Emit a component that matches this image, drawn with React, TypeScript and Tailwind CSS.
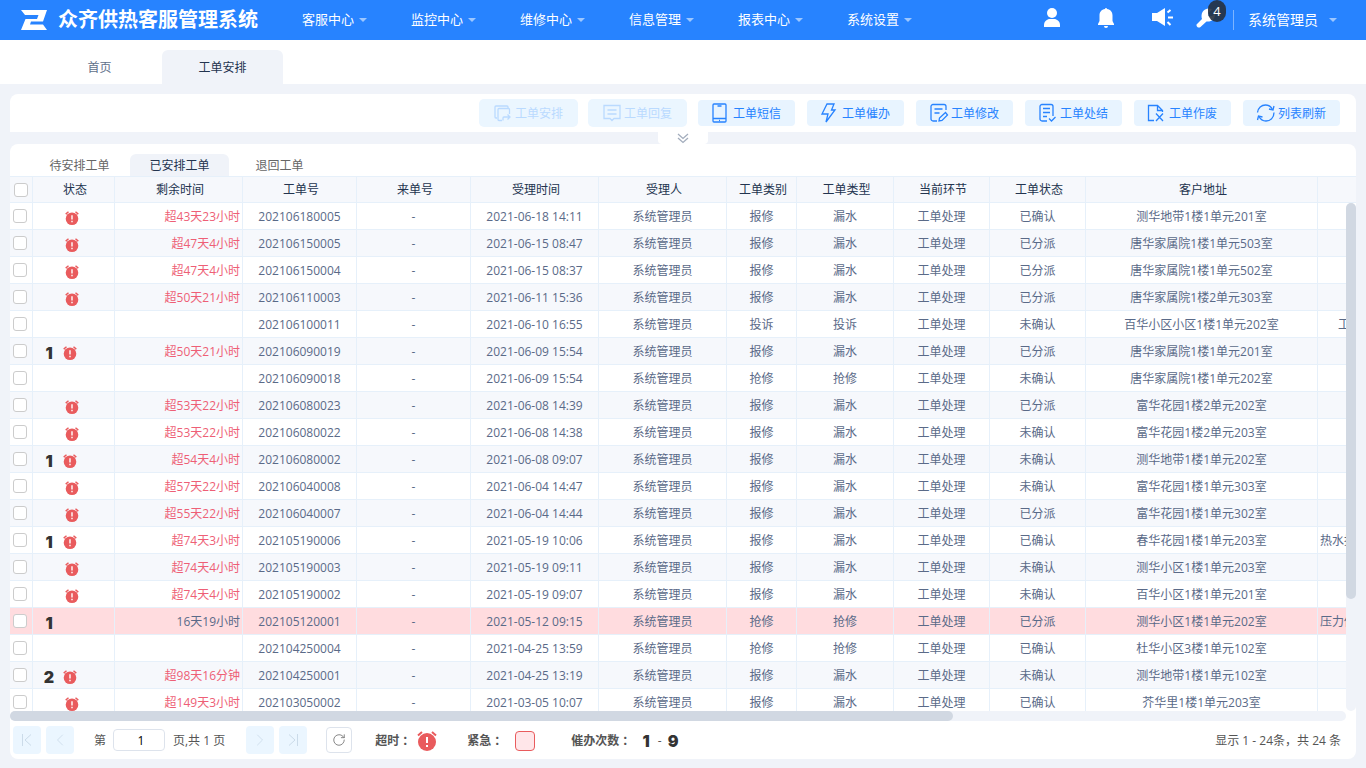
import type { ReactNode } from 'react'
import { ChevronLeft, ChevronRight, RotateCw } from 'lucide-react'

type Order = {
  urge?: number
  remain?: string
  no: string
  time: string
  kind: string
  type: string
  state: string
  address: string
  note?: string
  urgent?: boolean
}

const menus = ['客服中心', '监控中心', '维修中心', '信息管理', '报表中心', '系统设置']

const columns = [
  { title: '状态', width: 'w-[82px]' },
  { title: '剩余时间', width: 'w-[128px]' },
  { title: '工单号', width: 'w-[114px]' },
  { title: '来单号', width: 'w-[114px]' },
  { title: '受理时间', width: 'w-[128px]' },
  { title: '受理人', width: 'w-[128px]' },
  { title: '工单类别', width: 'w-[70px]' },
  { title: '工单类型', width: 'w-[97px]' },
  { title: '当前环节', width: 'w-[96px]' },
  { title: '工单状态', width: 'w-[96px]' },
  { title: '客户地址', width: 'w-[232px]' },
  { title: '', width: 'w-[232px]' },
]

const orders: Order[] = [
  { remain: '超43天23小时', no: '202106180005', time: '2021-06-18 14:11', kind: '报修', type: '漏水', state: '已确认', address: '测华地带1楼1单元201室' },
  { remain: '超47天4小时', no: '202106150005', time: '2021-06-15 08:47', kind: '报修', type: '漏水', state: '已分派', address: '唐华家属院1楼1单元503室' },
  { remain: '超47天4小时', no: '202106150004', time: '2021-06-15 08:37', kind: '报修', type: '漏水', state: '已分派', address: '唐华家属院1楼1单元502室' },
  { remain: '超50天21小时', no: '202106110003', time: '2021-06-11 15:36', kind: '报修', type: '漏水', state: '已分派', address: '唐华家属院1楼2单元303室' },
  { no: '202106100011', time: '2021-06-10 16:55', kind: '投诉', type: '投诉', state: '未确认', address: '百华小区小区1楼1单元202室', note: '工' },
  { urge: 1, remain: '超50天21小时', no: '202106090019', time: '2021-06-09 15:54', kind: '报修', type: '漏水', state: '已分派', address: '唐华家属院1楼1单元201室' },
  { no: '202106090018', time: '2021-06-09 15:54', kind: '抢修', type: '抢修', state: '未确认', address: '唐华家属院1楼1单元202室' },
  { remain: '超53天22小时', no: '202106080023', time: '2021-06-08 14:39', kind: '报修', type: '漏水', state: '已分派', address: '富华花园1楼2单元202室' },
  { remain: '超53天22小时', no: '202106080022', time: '2021-06-08 14:38', kind: '报修', type: '漏水', state: '未确认', address: '富华花园1楼2单元203室' },
  { urge: 1, remain: '超54天4小时', no: '202106080002', time: '2021-06-08 09:07', kind: '报修', type: '漏水', state: '未确认', address: '测华地带1楼1单元202室' },
  { remain: '超57天22小时', no: '202106040008', time: '2021-06-04 14:47', kind: '报修', type: '漏水', state: '未确认', address: '富华花园1楼1单元303室' },
  { remain: '超55天22小时', no: '202106040007', time: '2021-06-04 14:44', kind: '报修', type: '漏水', state: '已分派', address: '富华花园1楼1单元302室' },
  { urge: 1, remain: '超74天3小时', no: '202105190006', time: '2021-05-19 10:06', kind: '报修', type: '漏水', state: '已确认', address: '春华花园1楼1单元203室', note: '热水报' },
  { remain: '超74天4小时', no: '202105190003', time: '2021-05-19 09:11', kind: '报修', type: '漏水', state: '未确认', address: '测华小区1楼1单元203室' },
  { remain: '超74天4小时', no: '202105190002', time: '2021-05-19 09:07', kind: '报修', type: '漏水', state: '未确认', address: '百华小区1楼1单元201室' },
  { urge: 1, remain: '16天19小时', no: '202105120001', time: '2021-05-12 09:15', kind: '抢修', type: '抢修', state: '已分派', address: '测华小区1楼1单元202室', note: '压力低', urgent: true },
  { no: '202104250004', time: '2021-04-25 13:59', kind: '抢修', type: '抢修', state: '已确认', address: '杜华小区3楼1单元102室' },
  { urge: 2, remain: '超98天16分钟', no: '202104250001', time: '2021-04-25 13:19', kind: '报修', type: '漏水', state: '未确认', address: '测华地带1楼1单元102室' },
  { remain: '超149天3小时', no: '202103050002', time: '2021-03-05 10:07', kind: '报修', type: '漏水', state: '已确认', address: '芥华里1楼1单元203室' },
]

const tools: { label: string; disabled?: boolean; icon: ReactNode }[] = [
  {
    label: '工单安排',
    disabled: true,
    icon: (
      <>
        <path d="M4 15H3a1 1 0 0 1-1-1V4a1 1 0 0 1 1-1h11a1 1 0 0 1 1 1v1" />
        <path d="M16.5 11V6.5a1 1 0 0 0-1-1H6a1 1 0 0 0-1 1v10a1 1 0 0 0 1 1h3" />
        <path d="M10 17.5v-2.5a1 1 0 0 1 1-1h6M14.5 11.5 17 14l-2.500 2.500" />
      </>
    ),
  },
  {
    label: '工单回复',
    disabled: true,
    icon: <path d="M2 2.500h16v13h-6l-2 2-2-2H2zM5.500 7h9M5.500 11h9" />,
  },
  {
    label: '工单短信',
    icon: (
      <>
        <rect x="2" y="1" width="13" height="18" rx="1" />
        <path d="M2 15.500h13M6.500 3h4" />
        <path d="M8 17.500h1" />
      </>
    ),
  },
  {
    label: '工单催办',
    icon: <path d="M7 1h7l-2.500 6H15L6 19l2-8H2z" />,
  },
  {
    label: '工单修改',
    icon: (
      <>
        <path d="M8 18H4a2 2 0 0 1-2-2V3.500a2 2 0 0 1 2-2h11a2 2 0 0 1 2 2V7M5.500 6h8M5.500 10h5" />
        <path d="m10 18 .5-3 6-5.500 2 2.500-5.500 5.500z" />
      </>
    ),
  },
  {
    label: '工单处结',
    icon: (
      <>
        <path d="M9 18H4a2 2 0 0 1-2-2V3.500a2 2 0 0 1 2-2h9a2 2 0 0 1 2 2V13M5 5.500h7M5 9.500h7M5 13.500h4" />
        <path d="m11 15.500 2.500 2.500 4-4" />
      </>
    ),
  },
  {
    label: '工单作废',
    icon: (
      <>
        <path d="M7 17.500H1.500v-15h9l5 5V9M10.500 2.500v5h5" />
        <path d="m9 10.500 7 7.500M16 10.500 9 18" />
      </>
    ),
  },
  {
    label: '列表刷新',
    icon: (
      <>
        <path d="M1.500 9.500C2 5 5.500 2 9.500 2c3 0 5.500 1.500 7 4.500M18 9.500c0 5-3.500 8.500-8 8.500-3 0-5.500-1.500-7-4.500" />
        <path d="m13 6 4 1 1-4M6.500 14 2.500 13l-1 4" />
      </>
    ),
  },
]

function Caret() {
  return (
    <svg className="h-1 w-2" viewBox="0 0 8 4" fill="#fff" fillOpacity="0.55" aria-hidden="true">
      <path d="M0 0h8L4 4z" />
    </svg>
  )
}

function Alarm({ className }: { className: string }) {
  return (
    <svg className={className} viewBox="0 0 20 20" fill="#e95b5d" aria-hidden="true">
      <circle cx="10" cy="11" r="9" />
      <path d="M1 4.500 5 1M15 1l4 3.500" stroke="#e95b5d" strokeWidth="2" />
      <path d="M10 6v6M10 14v2" stroke="#fff" strokeWidth="2" />
    </svg>
  )
}

function UrgeCount({ value }: { value: number }) {
  return <span className="w-3 text-center font-['Inter'] text-base leading-5 font-black text-[#333]">{value}</span>
}

function TopBar() {
  return (
    <header className="flex h-10 shrink-0 items-center bg-[#2783ff] pr-[29px] pl-[21px] text-white">
      <svg className="h-5 w-[26px]" viewBox="0 0 26 20" fill="#fff" aria-hidden="true">
        <path d="M0 0h26l-4 11.500H10L9 14.500h13L26 20H0L4.500 9H16l1.500-4H4z" />
      </svg>
      <h1 className="ml-[11px] text-xl leading-10 font-bold whitespace-nowrap">众齐供热客服管理系统</h1>
      <nav className="ml-11 flex gap-11">
        {menus.map((menu) => (
          <button key={menu} type="button" className="flex items-center gap-[5px] text-[13px] whitespace-nowrap">
            {menu}
            <Caret />
          </button>
        ))}
      </nav>
      <div className="ml-auto flex h-10 items-start pt-[6px]">
        <button type="button" aria-label="个人" className="mr-[30px]">
          <svg className="size-6" viewBox="0 0 24 24" fill="#fff">
            <circle cx="12" cy="7" r="5" />
            <path d="M4 21v-2c0-3.500 3-6 6-6h4c3 0 6 2.500 6 6v2z" />
          </svg>
        </button>
        <button type="button" aria-label="提醒" className="mr-[30px]">
          <svg className="size-6" viewBox="0 0 24 24" fill="#fff">
            <path d="M11 3a1 1 0 0 1 2 0c3.500.5 5.500 3 5.500 6.500V15l1.500 3v1H4v-1l1.500-3V9.500C5.500 6 7.500 3.500 11 3zM10 20h4a2 2 0 0 1-4 0z" />
          </svg>
        </button>
        <button type="button" aria-label="公告">
          <svg className="h-6 w-[26px]" viewBox="0 0 26 24" fill="#fff">
            <path d="M4 7h5l8-5v18l-8-5H4z" />
            <path d="M19.500 6.500 22.500 4M20 11.500h5M19.500 16l3 3" stroke="#fff" strokeWidth="2" />
          </svg>
        </button>
        <button type="button" aria-label="工具" className="relative ml-5">
          <svg className="size-6" viewBox="0 0 24 24" fill="#fff">
            <path d="M2.500 18.500 8 13C6.500 8 9 3 14 2.500c1.500 0 3 .5 4 1L14.500 7v3H18l3-2.500c.5 5-3 8.500-8.500 8L6.500 21a2.500 2.500 0 0 1-4-2.500z" />
          </svg>
          <span className="absolute -top-[6px] left-[14px] flex h-[22px] w-[18px] items-center justify-center rounded-[9px] bg-[#26303f]/90 pt-[2px] text-[13px]">
            4
          </span>
        </button>
      </div>
      <div className="ml-[15px] h-5 w-px bg-white/40" />
      <button type="button" className="ml-[14px] flex items-center gap-[11px] text-sm whitespace-nowrap">
        系统管理员
        <Caret />
      </button>
    </header>
  )
}

function PageTabs() {
  return (
    <div className="flex shrink-0 gap-[2px] bg-white pt-[10px] pl-[39px]">
      <button type="button" className="h-[34px] w-[121px] pt-[2px] text-[#5f6f8a]">
        首页
      </button>
      <button type="button" className="h-[34px] w-[121px] rounded-t-md bg-[#f0f3f9] pt-[2px] text-[#23344f]">
        工单安排
      </button>
    </div>
  )
}

function Toolbar() {
  return (
    <div className="relative flex shrink-0 justify-end gap-3 rounded-t-lg bg-white py-[6px] pr-4">
      {tools.map((tool) => (
        <button
          key={tool.label}
          type="button"
          disabled={tool.disabled}
          className={[
            'flex h-[26px] w-[97px] items-center gap-[2px] rounded pl-[13px] whitespace-nowrap',
            tool.disabled ? 'bg-[#ebf6ff] text-[#badaff] ring-1 ring-[#ebf6ff]' : 'bg-[#e8f4ff] text-[#2783ff]',
          ].join(' ')}
        >
          <svg className="size-5 shrink-0" viewBox="0 0 20 20" fill="none" stroke="currentColor" strokeWidth="1.300" aria-hidden="true">
            {tool.icon}
          </svg>
          <span className="pt-[2px]">{tool.label}</span>
        </button>
      ))}
      <button
        type="button"
        aria-label="展开"
        className="absolute top-full left-1/2 flex h-3 w-[50px] -translate-x-1/2 items-center justify-center rounded-b bg-white text-[#a3adbd]"
      >
        <svg className="h-3 w-3" viewBox="0 0 12 12" fill="none" stroke="currentColor" strokeWidth="1.300" aria-hidden="true">
          <path d="m1 2 5 4.500L11 2M1 6l5 4.500L11 6" />
        </svg>
      </button>
    </div>
  )
}

function SubTabs() {
  return (
    <div className="flex shrink-0 gap-px pt-[10px] pl-5 text-[#666]">
      <button type="button" className="h-[22px] w-[99px] pt-[2px]">
        待安排工单
      </button>
      <button type="button" className="h-[22px] w-[99px] rounded-t-md bg-[#f0f3f9] pt-[2px] text-[#23344f]">
        已安排工单
      </button>
      <button type="button" className="h-[22px] w-[99px] pt-[2px]">
        退回工单
      </button>
    </div>
  )
}

const frame = 'h-[27px] border-r border-b border-[#e6f0fa] text-center whitespace-nowrap overflow-hidden'
const cell = `${frame} p-0 pt-[2px]`
const checkbox = 'block size-[14px] appearance-none rounded-[3px] border border-[#ccc] bg-white checked:bg-[#2783ff]'

function OrderRow({ order }: { order: Order }) {
  const late = order.remain?.startsWith('超')
  return (
    <tr className={order.urgent ? 'bg-[#ffdcdf]' : 'even:bg-[#f6f8fc]'}>
      <td className={`${frame} py-0 pr-0 pl-[3px]`}>
        <input type="checkbox" aria-label={order.no} className={checkbox} />
      </td>
      <td className={cell}>
        <div className={['flex items-center gap-2 pt-[2px]', order.urge ? 'pl-[10px]' : 'pl-8'].join(' ')}>
          {order.urge ? <UrgeCount value={order.urge} /> : null}
          {late ? <Alarm className="size-[14px]" /> : null}
        </div>
      </td>
      <td className={cell}>
        <div className={['pr-[2px] text-right', late ? 'text-[#ee5f76]' : ''].join(' ')}>{order.remain}</div>
      </td>
      <td className={cell}>{order.no}</td>
      <td className={cell}>-</td>
      <td className={cell}>{order.time}</td>
      <td className={cell}>系统管理员</td>
      <td className={cell}>{order.kind}</td>
      <td className={cell}>{order.type}</td>
      <td className={cell}>工单处理</td>
      <td className={cell}>{order.state}</td>
      <td className={cell}>{order.address}</td>
      <td className={cell}>
        <div className={['text-left', order.note === '工' ? 'pl-5' : 'pl-[2px]'].join(' ')}>{order.note}</div>
      </td>
    </tr>
  )
}

function OrderTable() {
  return (
    <div className="relative min-h-0 flex-1 overflow-hidden">
      <table className="w-[1540px] table-fixed border-separate border-spacing-0 text-[#5a6a88]">
        <thead className="bg-[#f6f8fc] text-[#23344f]">
          <tr>
            <th className={`${frame} w-[23px] border-t py-0 pr-0 pl-1`}>
              <input type="checkbox" aria-label="全选" className={checkbox} />
            </th>
            {columns.map((column, index) => (
              <th key={index} className={`${frame} ${column.width} border-t py-0 pr-0 pl-[3px] font-normal`}>
                {column.title}
              </th>
            ))}
          </tr>
        </thead>
        <tbody>
          {orders.map((order) => (
            <OrderRow key={order.no} order={order} />
          ))}
        </tbody>
      </table>
      <div className="absolute top-[27px] right-0 bottom-0 w-[10px] rounded-full bg-[#f0f3f9]">
        <div className="h-[78%] rounded-full bg-[#d1d8e2]" />
      </div>
    </div>
  )
}

function PageButton({ label, children }: { label: string; children: ReactNode }) {
  return (
    <button
      type="button"
      aria-label={label}
      disabled
      className="flex size-7 items-center justify-center rounded bg-[#ebf6ff] text-[#cbdbe9]"
    >
      {children}
    </button>
  )
}

function Pager() {
  return (
    <footer className="flex h-[38px] shrink-0 items-center pr-[15px] pl-[3px] whitespace-nowrap text-[#555]">
      <div className="flex gap-[5px]">
        <PageButton label="首页">
          <svg className="size-4" viewBox="0 0 16 16" fill="none" stroke="currentColor" aria-hidden="true">
            <path d="M3.500 2v12M12 2.500 6 8l6 5.500" />
          </svg>
        </PageButton>
        <PageButton label="上一页">
          <ChevronLeft className="size-5" strokeWidth={1} />
        </PageButton>
      </div>
      <label className="ml-5 flex items-center gap-[7px]">
        <span className="pt-[2px]">第</span>
        <input
          defaultValue="1"
          className="h-[22px] w-[52px] rounded-sm border border-[#dde3ec] bg-white pl-1 text-center text-black outline-none"
        />
      </label>
      <span className="ml-2 pt-[2px]">页,共 1 页</span>
      <div className="ml-[21px] flex gap-[5px]">
        <PageButton label="下一页">
          <ChevronRight className="size-5" strokeWidth={1} />
        </PageButton>
        <PageButton label="末页">
          <svg className="size-4" viewBox="0 0 16 16" fill="none" stroke="currentColor" aria-hidden="true">
            <path d="M12.500 2v12M4 2.500 10 8l-6 5.500" />
          </svg>
        </PageButton>
      </div>
      <button
        type="button"
        aria-label="刷新"
        className="ml-[19px] flex size-[26px] items-center justify-center rounded border border-[#dde3ec] text-[#777]"
      >
        <RotateCw className="size-[14px]" strokeWidth={1.5} />
      </button>
      <div className="ml-[23px] flex items-center pt-[2px]">
        <b className="w-[42px]">超时 ：</b>
        <Alarm className="size-5" />
      </div>
      <div className="ml-[30px] flex items-center pt-[2px]">
        <b className="w-12">紧急 ：</b>
        <span className="size-5 rounded-sm border border-[#e95b5d] bg-[#ffe6e9]" />
      </div>
      <div className="ml-9 flex items-center pt-[2px]">
        <b className="w-[69px]">催办次数 ：</b>
        <UrgeCount value={1} />
        <span className="w-[15px] text-center">-</span>
        <UrgeCount value={9} />
      </div>
      <span className="ml-auto pt-[2px]">显示 1 - 24条，共 24 条</span>
    </footer>
  )
}

export default function App() {
  return (
    <div className="flex h-screen flex-col bg-[#f0f3f9] font-['Open_Sans','Noto_Sans_CJK_SC',sans-serif] text-xs">
      <TopBar />
      <PageTabs />
      <main className="flex min-h-0 flex-1 flex-col gap-3 px-[10px] pt-[10px] pb-[9px]">
        <Toolbar />
        <section className="flex min-h-0 flex-1 flex-col overflow-hidden rounded-lg bg-white">
          <SubTabs />
          <OrderTable />
          <div className="mr-[10px] h-[10px] shrink-0 rounded-full bg-[#f0f3f9]">
            <div className="h-full w-12/17 rounded-full bg-[#d1d8e2]" />
          </div>
          <Pager />
        </section>
      </main>
    </div>
  )
}
